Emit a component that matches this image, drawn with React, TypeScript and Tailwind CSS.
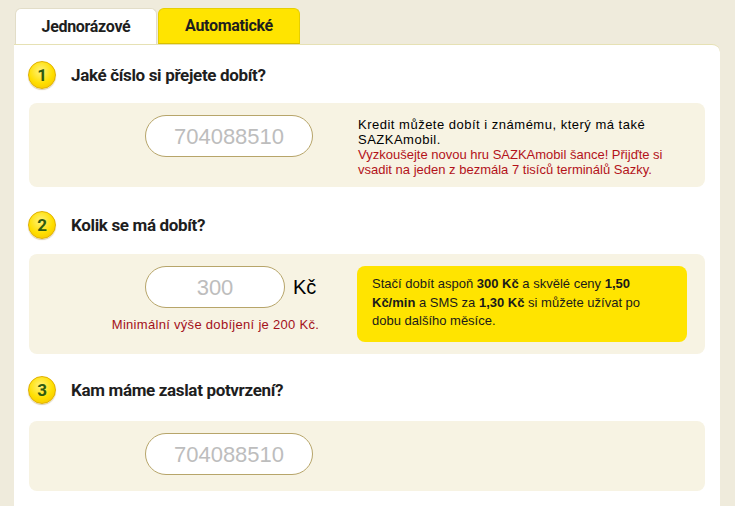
import type { ReactNode } from "react";

const HEAD = "font-['Roboto','Liberation_Sans',sans-serif] font-bold tracking-[-0.02em] text-[#1e1e1e]";
const BODY = "font-['Liberation_Sans','Arial',sans-serif]";

function Badge({ n }: { n: number }) {
  return (
    <span className="flex h-[28px] w-[28px] shrink-0 items-center justify-center rounded-full border border-[#e0b000] bg-[radial-gradient(circle_at_45%_35%,#fff27a_0%,#ffdf00_55%,#f2bd00_100%)] shadow-[0_1px_1px_rgba(150,110,0,0.35)]">
      <span className={`${HEAD} text-[17px] leading-none text-[#2f5a10]`}>{n}</span>
    </span>
  );
}

function StepHeading({ n, children }: { n: number; children: ReactNode }) {
  return (
    <div className="flex items-center gap-[15px] pl-[14px]">
      <Badge n={n} />
      <h2 className={`${HEAD} text-[17px] leading-none`}>{children}</h2>
    </div>
  );
}

function PillInput({ value, width }: { value: string; width: string }) {
  return (
    <div
      className={`${width} flex h-[42px] shrink-0 items-center justify-center rounded-full border border-[#b7a56a] bg-white ${BODY} text-[22px] text-[#bdbdbd]`}
    >
      {value}
    </div>
  );
}

export default function App() {
  return (
    <div className="min-h-[506px] bg-[#efebdc] pt-[8px]">
      {/* Tabs */}
      <div className="ml-[15px] flex items-end">
        <div className={`${HEAD} flex h-[36px] w-[142px] items-center justify-center rounded-t-[6px] border border-b-0 border-[#e2ddc8] bg-white text-[16px]`}>
          Jednorázové
        </div>
        <div className={`${HEAD} ml-[1px] flex h-[36px] w-[142px] items-center justify-center rounded-t-[6px] border border-[#e6cf00] border-b-[#d9c000] bg-[#ffe400] text-[16px]`}>
          Automatické
        </div>
      </div>

      {/* Panel */}
      <div className="ml-[14px] w-[706px] rounded-tr-[8px] border-t border-[#e6e1b4] bg-white pb-[20px] pt-[16px]">
        <StepHeading n={1}>Jaké číslo si přejete dobít?</StepHeading>
        <div className={`${BODY} mx-[15px] mt-[14px] flex h-[84px] rounded-[8px] bg-[#f7f3e3] pl-[116px] pt-[12px]`}>
          <PillInput value="704088510" width="w-[168px]" />
          <div className="ml-[45px] mt-[2px] whitespace-nowrap text-[13px] leading-[15px] tracking-[0.5px] text-black">
            Kredit můžete dobít i známému, který má také
            <br />
            SAZKAmobil.
            <br />
            <span className="tracking-[0px] text-[#b3121a]">
              Vyzkoušejte novou hru SAZKAmobil šance! Přijďte si
              <br />
              vsadit na jeden z bezmála 7 tisíců terminálů Sazky.
            </span>
          </div>
        </div>

        <div className="mt-[24px]">
          <StepHeading n={2}>Kolik se má dobít?</StepHeading>
        </div>
        <div className={`${BODY} mx-[15px] mt-[15px] flex h-[100px] rounded-[8px] bg-[#f7f3e3] pt-[12px]`}>
          <div className="ml-[86px] flex w-[201px] flex-col items-center">
            <div className="flex items-center self-start pl-[30px]">
              <PillInput value="300" width="w-[140px]" />
              <span className="ml-[8px] text-[20px] text-black">Kč</span>
            </div>
            <p className="mt-[9px] whitespace-nowrap text-[13px] leading-[15px] tracking-[0.3px] text-[#a3101a]">
              Minimální výše dobíjení je 200 Kč.
            </p>
          </div>
          <div className="ml-[41px] h-[76px] w-[330px] whitespace-nowrap rounded-[8px] bg-[#ffe400] px-[15px] pt-[9px] text-[13px] leading-[18.5px] text-[#1a1a1a]">
            Stačí dobít aspoň <b>300 Kč</b> a skvělé ceny <b>1,50</b>
            <br />
            <b>Kč/min</b> a SMS za <b>1,30 Kč</b> si můžete užívat po
            <br />
            dobu dalšího měsíce.
          </div>
        </div>

        <div className="mt-[22px]">
          <StepHeading n={3}>Kam máme zaslat potvrzení?</StepHeading>
        </div>
        <div className="mx-[15px] mt-[17px] flex h-[70px] rounded-[8px] bg-[#f7f3e3] pl-[116px] pt-[12px]">
          <PillInput value="704088510" width="w-[168px]" />
        </div>
      </div>
    </div>
  );
}
